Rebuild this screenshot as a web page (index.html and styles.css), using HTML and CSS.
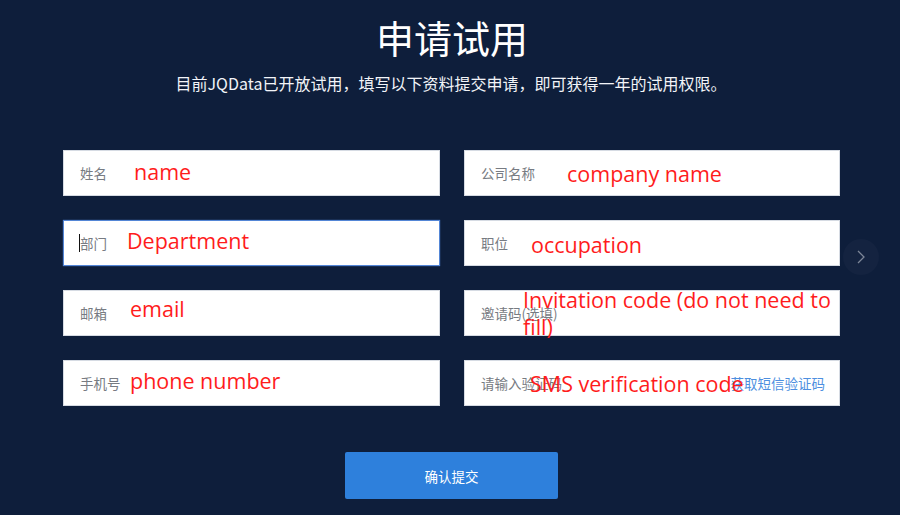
FILE: index.html
```html
<!DOCTYPE html>
<html lang="zh">
<head>
<meta charset="utf-8">
<title>申请试用</title>
<link rel="stylesheet" href="styles.css">
</head>
<body>
<div class="page">
  <h1 class="title">申请试用</h1>
  <p class="subtitle">目前JQData已开放试用，填写以下资料提交申请，即可获得一年的试用权限。</p>
  <div class="form">
    <div class="field"><span class="label">姓名</span><span class="note n-name">name</span></div>
    <div class="field"><span class="label">公司名称</span><span class="note n-company">company name</span></div>
    <div class="field focused"><span class="caret"></span><span class="label">部门</span><span class="note n-dept">Department</span></div>
    <div class="field"><span class="label">职位</span><span class="note n-occ">occupation</span></div>
    <div class="field"><span class="label">邮箱</span><span class="note n-email">email</span></div>
    <div class="field"><span class="label">邀请码(选填)</span><span class="note n-invite">Invitation code (do not need to fill)</span></div>
    <div class="field"><span class="label">手机号</span><span class="note n-phone">phone number</span></div>
    <div class="field"><span class="label">请输入验证码</span><span class="link">获取短信验证码</span><span class="note n-sms">SMS verification code</span></div>
  </div>
  <div class="actions"><button class="submit">确认提交</button></div>
  <div class="next"><svg width="12" height="18" viewBox="0 0 12 18"><path d="M3 3 L9 9 L3 15" fill="none" stroke="#7d8698" stroke-width="1.3"/></svg></div>
</div>
</body>
</html>
```
FILE: styles.css
```css
html, body {
  margin: 0;
  padding: 0;
  background: #0e1e3b;
}
body {
  font-family: "Noto Sans CJK SC", "Noto Sans", sans-serif;
  width: 900px;
  height: 515px;
  overflow: hidden;
}
.page {
  position: relative;
  height: 515px;
}
.title {
  margin: 0;
  padding-top: 12px;
  text-align: center;
  color: #ffffff;
  font-size: 38px;
  font-weight: 400;
  line-height: 50px;
  padding-left: 4px;
}
.subtitle {
  margin: 10px 0 0;
  text-align: center;
  color: #f2f4f8;
  font-size: 16px;
  line-height: 22px;
  padding-left: 2px;
}
.form {
  display: grid;
  grid-template-columns: 377px 376px;
  column-gap: 24px;
  row-gap: 24px;
  margin: 56px 0 0 63px;
}
.field {
  position: relative;
  height: 46px;
  box-sizing: border-box;
  background: #ffffff;
  border: 1px solid #d6dbe3;
  display: flex;
  align-items: center;
  padding: 0 14px 0 16px;
}
.field.focused {
  border-color: #5486d6;
  box-shadow: 0 0 1px #5486d6;
}
.caret {
  position: absolute;
  left: 15px;
  top: 13px;
  width: 1px;
  height: 18px;
  background: #111;
}
.label {
  color: #777b82;
  font-size: 13.5px;
  flex: 1;
}
.link {
  color: #4d8fe0;
  font-size: 13.5px;
}
.note {
  position: absolute;
  color: #ff1c1c;
  font-family: "Open Sans", "Noto Sans", sans-serif;
  font-size: 21.5px;
  line-height: 26px;
  white-space: nowrap;
}
.n-name { left: 70px; top: 8px; }
.n-company { left: 102px; top: 10px; }
.n-dept { left: 63px; top: 7px; }
.n-occ { left: 66px; top: 11px; }
.n-email { left: 66px; top: 5px; }
.n-invite {
  left: 58px;
  top: -5px;
  white-space: normal;
  width: 325px;
  line-height: 27px;
}
.n-phone { left: 66px; top: 7px; }
.n-sms { left: 65px; top: 10px; }
.actions {
  display: flex;
  justify-content: center;
  margin-top: 46px;
  padding-left: 3px;
}
.submit {
  width: 213px;
  height: 47px;
  border: none;
  border-radius: 2px;
  background: #2e80dc;
  color: #ffffff;
  font-family: "Noto Sans CJK SC", sans-serif;
  font-size: 13.5px;
}
.next {
  position: absolute;
  left: 843px;
  top: 239px;
  width: 36px;
  height: 36px;
  border-radius: 50%;
  background: #142340;
  display: flex;
  align-items: center;
  justify-content: center;
}
```
